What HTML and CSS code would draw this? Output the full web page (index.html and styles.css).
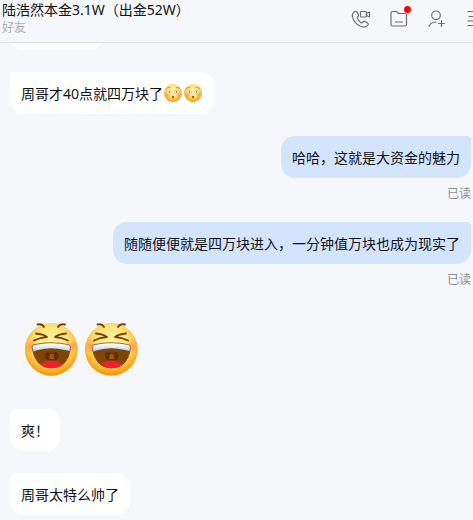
FILE: index.html
```html
<!DOCTYPE html>
<html lang="zh-CN">

<head>
    <meta charset="UTF-8">
    <meta name="viewport" content="width=device-width, initial-scale=1.0">
    <title>陆浩然本金3.1W（出金52W）</title>
    <link rel="stylesheet" href="styles.css">
</head>

<body>
    <!-- shared emoji drawings -->
    <svg class="defs" aria-hidden="true">
        <defs>
            <radialGradient id="face" cx="50%" cy="38%" r="62%">
                <stop offset="0" stop-color="#fff6a8" />
                <stop offset="0.5" stop-color="#fee57c" />
                <stop offset="0.8" stop-color="#fcb936" />
                <stop offset="1" stop-color="#ee920c" />
            </radialGradient>
            <radialGradient id="cheek">
                <stop offset="0" stop-color="#ff8a50" stop-opacity="0.7" />
                <stop offset="1" stop-color="#ff8a50" stop-opacity="0" />
            </radialGradient>
            <linearGradient id="teeth" x1="0" y1="0" x2="0" y2="1">
                <stop offset="0.3" stop-color="#ffffff" />
                <stop offset="1" stop-color="#b4cbea" />
            </linearGradient>
            <clipPath id="mouth">
                <path d="M10 27Q10 25 13 24.5Q29 21 46 24.5Q49 25 48.5 28Q46 48 29.5 48Q13 48 10 27Z" />
            </clipPath>
            <symbol id="laugh" viewBox="0 0 60 60">
                <circle cx="29.3" cy="29.3" r="26.4" fill="url(#face)" />
                <ellipse cx="9" cy="26" rx="7" ry="7" fill="url(#cheek)" />
                <ellipse cx="50" cy="26" rx="7" ry="7" fill="url(#cheek)" />
                <g fill="none" stroke="#7a4108" stroke-width="1.8" stroke-linecap="round" stroke-linejoin="round">
                    <path d="M15.5 4.500Q20 3.5 22 7M43 4.500Q38 3.5 36 7" />
                    <path d="M14 13.5Q21 14 25 17Q18 17.5 12 20.5M44 13.5Q37 14 33 17Q40 17.5 46 20.5" />
                </g>
                <g clip-path="url(#mouth)">
                    <rect x="8" y="20" width="43" height="30" fill="#804406" />
                    <path d="M23 35Q24 31 28 32.5L30 33L32 32.5Q36 31 36.5 35Q37 41 31 40.5H28Q23 40 23 35Z" fill="#5c2f04" />
                    <path d="M28 34H31.5L32.5 39H27Z" fill="#a8500f" />
                    <ellipse cx="29.5" cy="47" rx="12" ry="6.5" fill="#ef2029" />
                    <path d="M8 20H51V32Q46 30.500 43 30Q29 26.500 16 30Q13 30.500 11 32Z" fill="url(#teeth)" />
                </g>
                <path d="M10 27Q10 25 13 24.5Q29 21 46 24.5Q49 25 48.5 28Q46 48 29.5 48Q13 48 10 27Z" fill="none" stroke="#995112" stroke-width="0.8" />
            </symbol>
            <symbol id="flushed" viewBox="0 1 20 18">
                <circle cx="10" cy="10" r="9" fill="url(#face)" />
                <circle cx="4" cy="12" r="3" fill="url(#cheek)" />
                <circle cx="16" cy="12" r="3" fill="url(#cheek)" />
                <path d="M3.5 5.5Q5 4 7 4.5M13 4.5Q15 4 16.5 5.5" fill="none" stroke="#b98632" stroke-width="0.8" stroke-linecap="round" />
                <g fill="#fdf8e0" stroke="#cfa451" stroke-width="0.5">
                    <ellipse cx="6" cy="9" rx="2.7" ry="1.9" />
                    <ellipse cx="14" cy="9" rx="2.7" ry="1.9" />
                </g>
                <circle cx="6.3" cy="9" r="0.7" fill="#5b3a12" />
                <circle cx="13.7" cy="9" r="0.7" fill="#5b3a12" />
                <ellipse cx="10" cy="14" rx="1" ry="1.2" fill="#9a4b12" />
            </symbol>
        </defs>
    </svg>

    <header class="chat-header">
        <div class="contact">
            <h1>陆浩然本金3.1W（出金52W）</h1>
            <p>好友</p>
        </div>
        <div class="actions">
            <button type="button" aria-label="通话">
                <svg viewBox="0 0 20 20">
                    <path d="M4 2.5C2 3.5 1 5.5 1.5 8C2.5 13 7 17.5 12 18C14 18.2 16 17.5 17 16C17.5 15.2 17.3 14.5 16.5 14L14 12.5C13.2 12 12.5 12.3 12 13C11.3 14 10.5 14 9.5 13.3C8 12.2 7 10.8 6.3 9.3C6 8.5 6.2 8 7 7.5C7.8 7 7.9 6.5 7.5 5.7L6 3C5.5 2.2 4.8 2.1 4 2.5Z" />
                    <rect x="9.5" y="2.5" width="6" height="5.5" rx="1" />
                    <path d="M15.5 4.5L18.5 3V8L15.5 6.5Z" />
                </svg>
            </button>
            <button type="button" aria-label="文件">
                <svg viewBox="0 0 20 20">
                    <path d="M2 4Q2 2.5 3.5 2.5H7.5L9.5 4.5H16Q17.5 4.5 17.5 6V15.5Q17.5 17 16 17H3.5Q2 17 2 15.5ZM6.500 13H13.5" />
                </svg>
                <span class="dot"></span>
            </button>
            <button type="button" aria-label="添加成员">
                <svg viewBox="0 0 20 20">
                    <circle cx="9" cy="6.300" r="4.300" />
                    <path d="M2 17.5C3 14.5 5.5 13 9 13M14.5 11.500V17.5M11.5 14.5H17.5" />
                </svg>
            </button>
            <button type="button" aria-label="菜单">
                <svg viewBox="0 0 20 20">
                    <path d="M3 2.5H18M4 7.500H18M3 12H18M3 16.5H18" />
                </svg>
            </button>
        </div>
    </header>

    <main class="messages">
        <div class="bubble previous"></div>
        <div class="bubble">周哥才40点就四万块了<svg class="emoji" role="img" aria-label="脸红"><use href="#flushed" /></svg><svg class="emoji" role="img" aria-label="脸红"><use href="#flushed" /></svg></div>
        <div class="sent">
            <div class="bubble">哈哈，这就是大资金的魅力</div>
            <span class="status">已读</span>
        </div>
        <div class="sent">
            <div class="bubble">随随便便就是四万块进入，一分钟值万块也成为现实了</div>
            <span class="status">已读</span>
        </div>
        <div class="sticker">
            <svg role="img" aria-label="大笑"><use href="#laugh" /></svg>
            <svg role="img" aria-label="大笑"><use href="#laugh" /></svg>
        </div>
        <div class="bubble">爽！</div>
        <div class="bubble">周哥太特么帅了</div>
    </main>
</body>

</html>
```
FILE: styles.css
```css
* {
    box-sizing: border-box;
}

body {
    margin: 0;
    height: 100vh;
    display: flex;
    flex-direction: column;
    overflow: hidden;
    background-color: #f5f7fb;
    color: #111;
    font-family: "Noto Sans", "Noto Sans CJK SC", sans-serif;
    font-size: 14px;
}

.defs {
    position: absolute;
    width: 0;
    height: 0;
}

.chat-header {
    display: flex;
    flex-shrink: 0;
    justify-content: space-between;
    height: 43px;
    padding-left: 2px;
    border-bottom: 1px solid #e0e2e7;
    overflow: hidden;
}

.contact h1 {
    margin: 0;
    font-size: 14px;
    font-weight: normal;
    line-height: 20px;
    white-space: nowrap;
}

.contact p {
    margin: 0;
    font-size: 12px;
    line-height: 16px;
    color: #adafb3;
}

.actions {
    display: flex;
    gap: 18px;
    margin-right: -12px;
    padding-top: 9px;
}

.actions button {
    position: relative;
    width: 20px;
    height: 20px;
    padding: 0;
    border: none;
    background: none;
    cursor: pointer;
}

.actions svg {
    display: block;
    width: 20px;
    height: 20px;
    fill: none;
    stroke: #6b6e74;
    stroke-width: 1.2;
    stroke-linecap: round;
    stroke-linejoin: round;
}

.dot {
    position: absolute;
    top: -3px;
    right: -2px;
    width: 7px;
    height: 7px;
    border-radius: 50%;
    background-color: #ff0000;
}

.messages {
    flex: 1;
    display: flex;
    flex-direction: column;
    align-items: flex-start;
    padding: 0 2px 0 10px;
    overflow: hidden;
}

.bubble {
    flex-shrink: 0;
    min-height: 42px;
    margin-bottom: 22px;
    padding: 12px 11px 10px;
    border-radius: 4px 14px 14px 14px;
    background-color: #fff;
    line-height: 20px;
}

/* only the bottom edge shows under the header */
.previous {
    width: 93px;
    margin-top: -35px;
}

.emoji {
    width: 20px;
    height: 18px;
    vertical-align: top;
}

.sent {
    display: flex;
    flex-direction: column;
    align-items: flex-end;
    align-self: flex-end;
    margin-bottom: 18px;
}

.sent .bubble {
    margin-bottom: 6px;
    border-radius: 14px 4px 14px 14px;
    background-color: #d3e4ff;
}

.status {
    font-size: 12px;
    line-height: 20px;
    color: #8c9097;
}

.sticker {
    display: flex;
    padding: 12px 12px 7px;
    margin-bottom: 22px;
}

.sticker svg {
    width: 60px;
    height: 60px;
}
```
